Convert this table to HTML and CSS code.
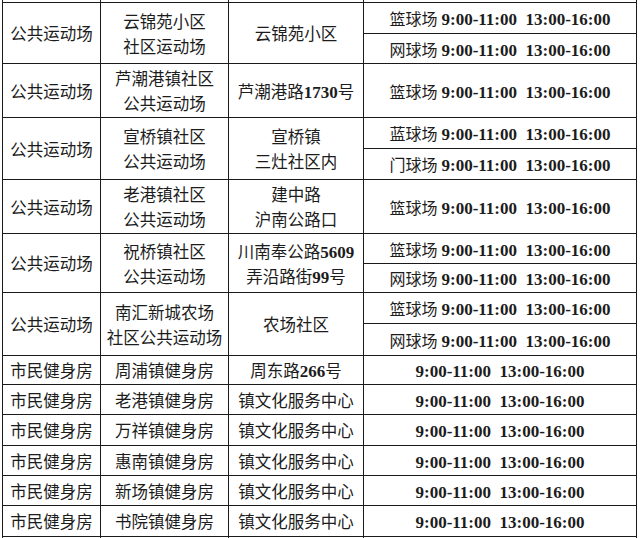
FILE: index.html
```html
<!DOCTYPE html>
<html lang="zh-CN">
<head>
<meta charset="utf-8">
<title>公共运动场与市民健身房开放时间</title>
<link rel="stylesheet" href="styles.css">
</head>
<body>
<div class="sheet">
  <div class="c"></div><div class="c"></div><div class="c"></div><div class="c"></div>

  <div class="c r2"><p>公共运动场</p></div>
  <div class="c r2"><p>云锦苑小区<br>社区运动场</p></div>
  <div class="c r2"><p>云锦苑小区</p></div>
  <div class="c t"><p>篮球场 <b>9:00-11:00&nbsp; 13:00-16:00</b></p></div>
  <div class="c t"><p>网球场 <b>9:00-11:00&nbsp; 13:00-16:00</b></p></div>

  <div class="c"><p>公共运动场</p></div>
  <div class="c"><p>芦潮港镇社区<br>公共运动场</p></div>
  <div class="c"><p>芦潮港路<b>1730</b>号</p></div>
  <div class="c t"><p>篮球场 <b>9:00-11:00&nbsp; 13:00-16:00</b></p></div>

  <div class="c r2"><p>公共运动场</p></div>
  <div class="c r2"><p>宣桥镇社区<br>公共运动场</p></div>
  <div class="c r2"><p>宣桥镇<br>三灶社区内</p></div>
  <div class="c t"><p>蓝球场 <b>9:00-11:00&nbsp; 13:00-16:00</b></p></div>
  <div class="c t"><p>门球场 <b>9:00-11:00&nbsp; 13:00-16:00</b></p></div>

  <div class="c"><p>公共运动场</p></div>
  <div class="c"><p>老港镇社区<br>公共运动场</p></div>
  <div class="c"><p>建中路<br>沪南公路口</p></div>
  <div class="c t"><p>篮球场 <b>9:00-11:00&nbsp; 13:00-16:00</b></p></div>

  <div class="c r2"><p>公共运动场</p></div>
  <div class="c r2"><p>祝桥镇社区<br>公共运动场</p></div>
  <div class="c r2"><p>川南奉公路<b>5609</b><br>弄沿路街<b>99</b>号</p></div>
  <div class="c t"><p>篮球场 <b>9:00-11:00&nbsp; 13:00-16:00</b></p></div>
  <div class="c t"><p>网球场 <b>9:00-11:00&nbsp; 13:00-16:00</b></p></div>

  <div class="c r2"><p>公共运动场</p></div>
  <div class="c r2"><p>南汇新城农场<br>社区公共运动场</p></div>
  <div class="c r2"><p>农场社区</p></div>
  <div class="c t"><p>篮球场 <b>9:00-11:00&nbsp; 13:00-16:00</b></p></div>
  <div class="c t"><p>网球场 <b>9:00-11:00&nbsp; 13:00-16:00</b></p></div>

  <div class="c"><p>市民健身房</p></div>
  <div class="c"><p>周浦镇健身房</p></div>
  <div class="c"><p>周东路<b>266</b>号</p></div>
  <div class="c t"><p><b>9:00-11:00&nbsp; 13:00-16:00</b></p></div>

  <div class="c"><p>市民健身房</p></div>
  <div class="c"><p>老港镇健身房</p></div>
  <div class="c"><p>镇文化服务中心</p></div>
  <div class="c t"><p><b>9:00-11:00&nbsp; 13:00-16:00</b></p></div>

  <div class="c"><p>市民健身房</p></div>
  <div class="c"><p>万祥镇健身房</p></div>
  <div class="c"><p>镇文化服务中心</p></div>
  <div class="c t"><p><b>9:00-11:00&nbsp; 13:00-16:00</b></p></div>

  <div class="c"><p>市民健身房</p></div>
  <div class="c"><p>惠南镇健身房</p></div>
  <div class="c"><p>镇文化服务中心</p></div>
  <div class="c t"><p><b>9:00-11:00&nbsp; 13:00-16:00</b></p></div>

  <div class="c"><p>市民健身房</p></div>
  <div class="c"><p>新场镇健身房</p></div>
  <div class="c"><p>镇文化服务中心</p></div>
  <div class="c t"><p><b>9:00-11:00&nbsp; 13:00-16:00</b></p></div>

  <div class="c"><p>市民健身房</p></div>
  <div class="c"><p>书院镇健身房</p></div>
  <div class="c"><p>镇文化服务中心</p></div>
  <div class="c t"><p><b>9:00-11:00&nbsp; 13:00-16:00</b></p></div>

  <div class="c"></div><div class="c"></div><div class="c"></div><div class="c"></div>
</div>
</body>
</html>
```

FILE: styles.css
```css
html, body {
  margin: 0;
  padding: 0;
  background: #fff;
}
body {
  height: 538px;
  overflow: hidden;
  font-family: "Liberation Serif", "Noto Sans CJK SC", serif;
  color: #1c1c1c;
}
.sheet {
  display: grid;
  grid-template-columns: 98px 128px 135px 273px;
  grid-template-rows: 11px 31px 30px 54px 31px 31px 54px 30px 29px 31px 32px 29px 30px 31px 30px 30px 31px 30px;
  margin: -9px 0 0 2px;
  width: max-content;
  border-left: 1px solid #1a1a1a;
  border-top: 1px solid #1a1a1a;
}
.c {
  box-sizing: border-box;
  border-right: 1px solid #1a1a1a;
  border-bottom: 1px solid #1a1a1a;
  display: flex;
  align-items: center;
  justify-content: center;
  text-align: center;
  font-size: 16.5px;
  line-height: 25px;
  padding-top: 3px;
  white-space: nowrap;
}
.c p {
  margin: 0;
}
.r2 {
  grid-row: span 2;
}
.c b {
  font-weight: 700;
  font-size: 17px;
}
.t {
  font-size: 16px;
}
```
